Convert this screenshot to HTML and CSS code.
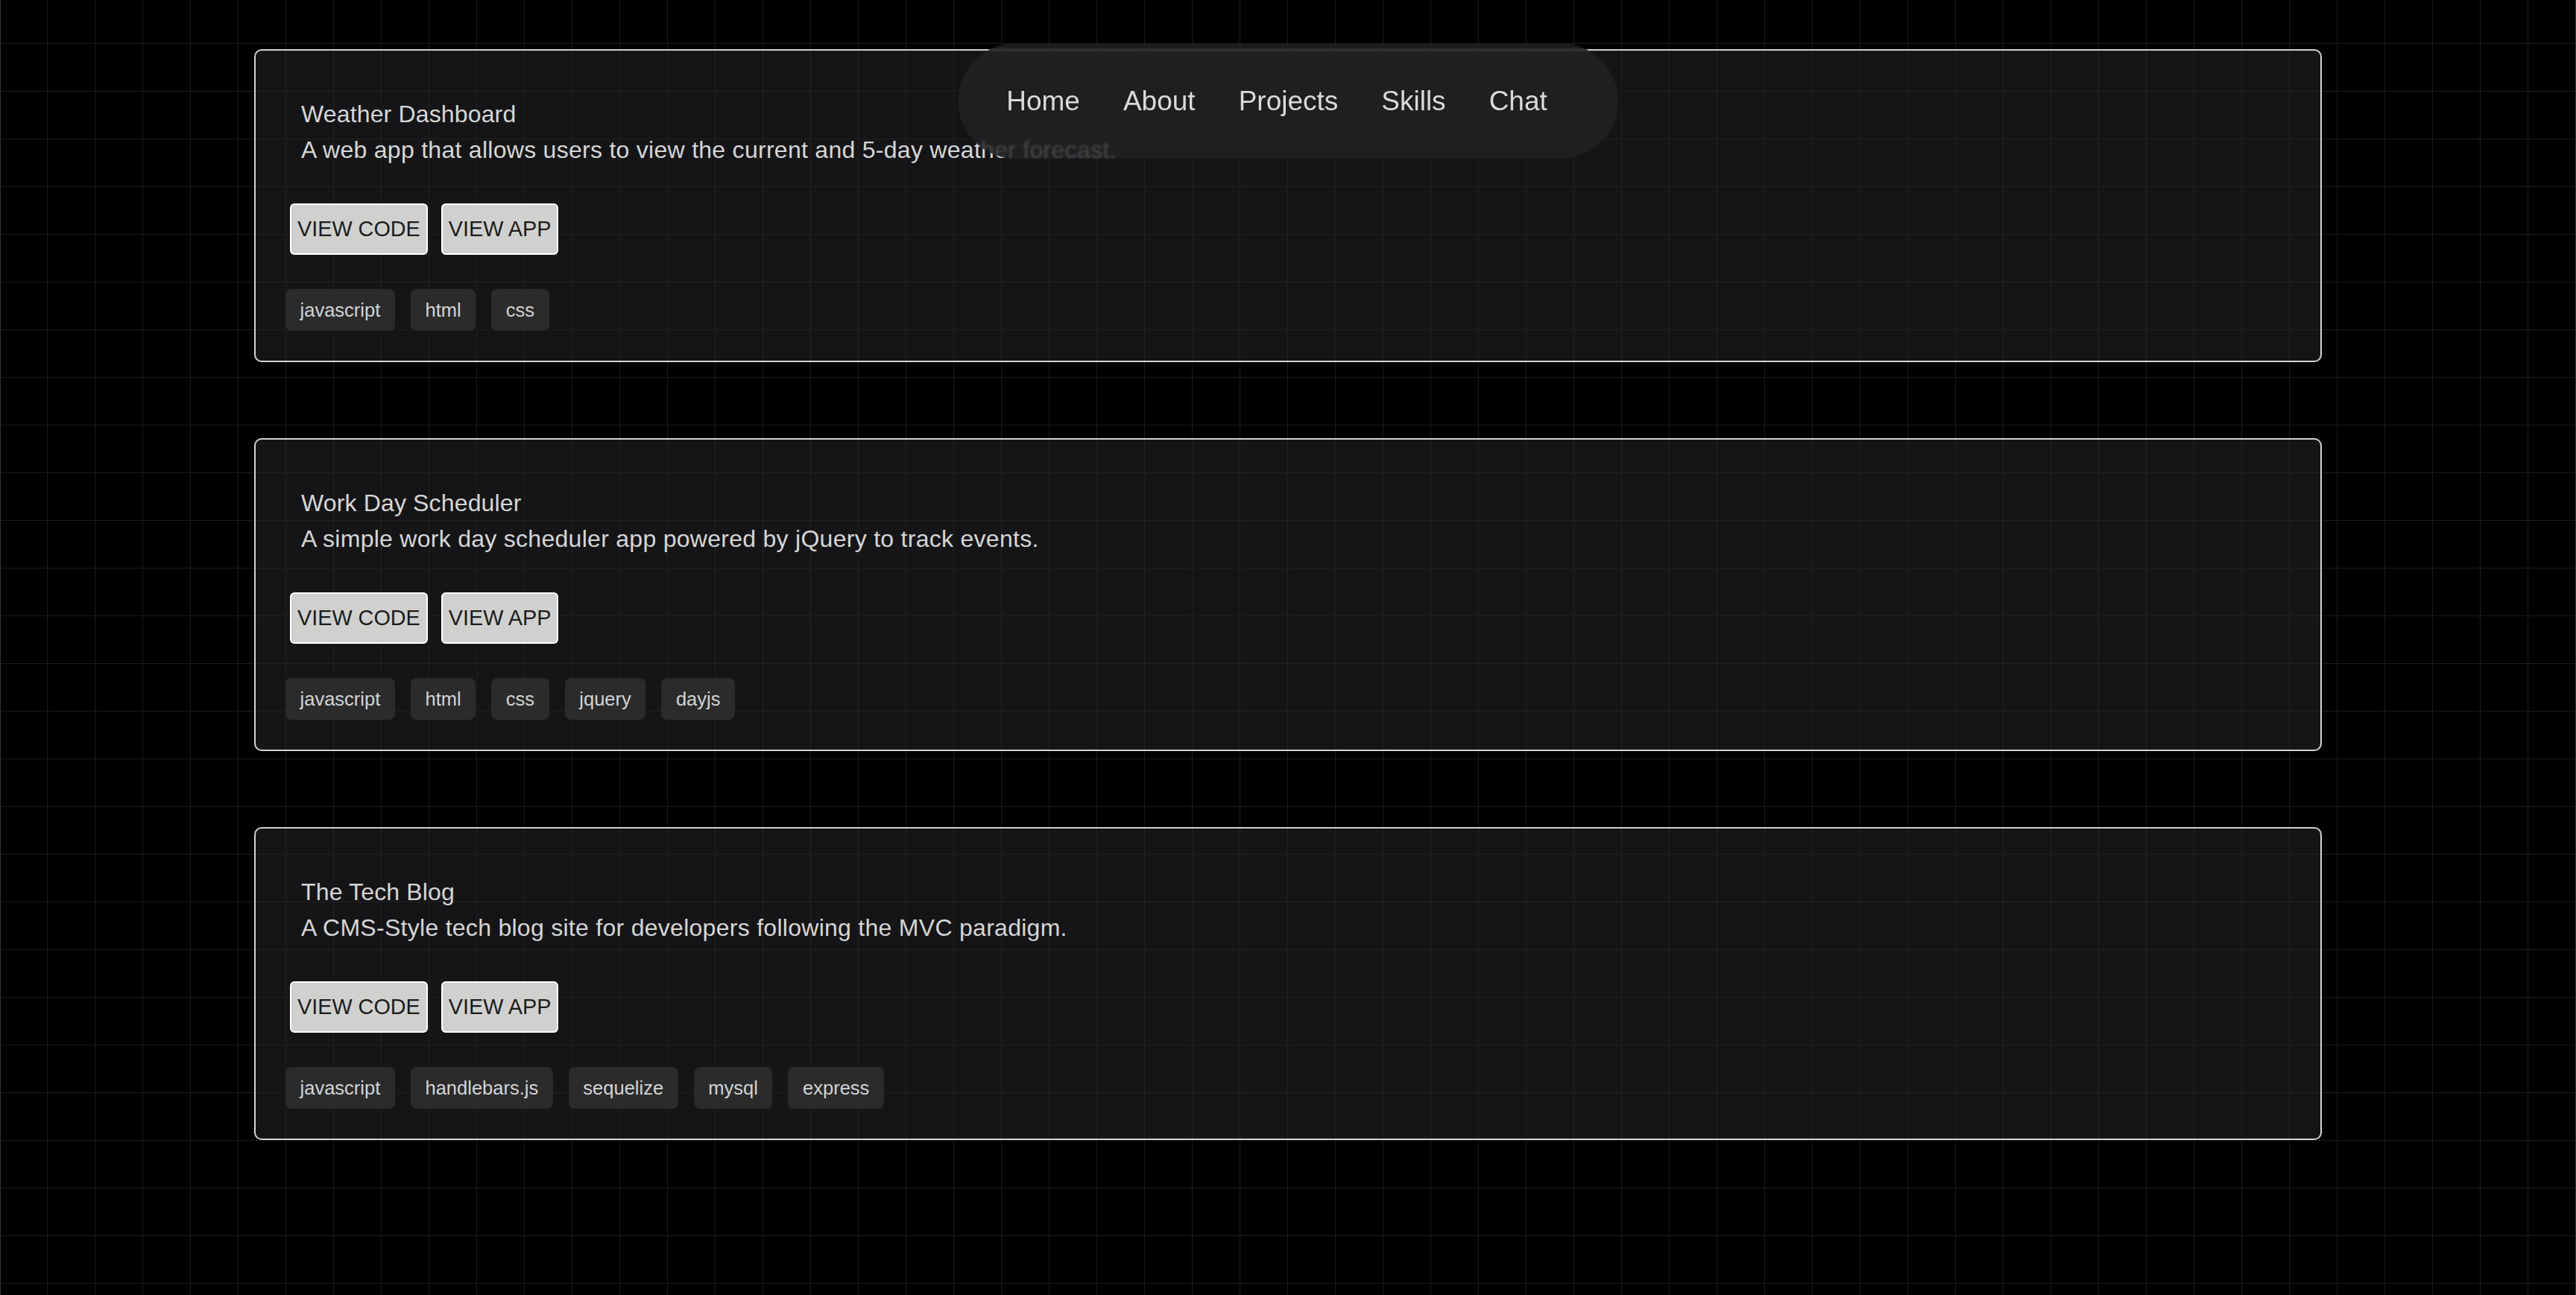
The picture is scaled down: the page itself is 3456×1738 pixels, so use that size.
FILE: index.html
```html
<!DOCTYPE html>
<html lang="en">
<head>
<meta charset="utf-8">
<title>Projects</title>
<link rel="stylesheet" href="styles.css">
</head>
<body>
<nav class="nav">
  <a class="nav-link" href="#">Home</a>
  <a class="nav-link" href="#">About</a>
  <a class="nav-link" href="#">Projects</a>
  <a class="nav-link" href="#">Skills</a>
  <a class="nav-link" href="#">Chat</a>
</nav>
<div class="page">
  <main class="projects">
    <section class="card">
      <div class="card-head">
        <h2 class="card-title">Weather Dashboard</h2>
        <p class="card-desc">A web app that allows users to view the current and 5-day weather forecast.</p>
      </div>
      <div class="actions">
        <button class="btn">VIEW CODE</button>
        <button class="btn">VIEW APP</button>
      </div>
      <ul class="tags">
        <li class="tag">javascript</li>
        <li class="tag">html</li>
        <li class="tag">css</li>
      </ul>
    </section>
    <section class="card">
      <div class="card-head">
        <h2 class="card-title">Work Day Scheduler</h2>
        <p class="card-desc">A simple work day scheduler app powered by jQuery to track events.</p>
      </div>
      <div class="actions">
        <button class="btn">VIEW CODE</button>
        <button class="btn">VIEW APP</button>
      </div>
      <ul class="tags">
        <li class="tag">javascript</li>
        <li class="tag">html</li>
        <li class="tag">css</li>
        <li class="tag">jquery</li>
        <li class="tag">dayjs</li>
      </ul>
    </section>
    <section class="card">
      <div class="card-head">
        <h2 class="card-title">The Tech Blog</h2>
        <p class="card-desc">A CMS-Style tech blog site for developers following the MVC paradigm.</p>
      </div>
      <div class="actions">
        <button class="btn">VIEW CODE</button>
        <button class="btn">VIEW APP</button>
      </div>
      <ul class="tags">
        <li class="tag">javascript</li>
        <li class="tag">handlebars.js</li>
        <li class="tag">sequelize</li>
        <li class="tag">mysql</li>
        <li class="tag">express</li>
      </ul>
    </section>
  </main>
</div>
</body>
</html>
```
FILE: styles.css
```css
* {
  box-sizing: border-box;
}

html, body {
  margin: 0;
  padding: 0;
}

body {
  min-height: 100vh;
  background-color: #000;
  background-image:
    linear-gradient(to right, #1c1c1c 0, #1c1c1c 1px, transparent 1px),
    linear-gradient(to bottom, #1c1c1c 0, #1c1c1c 1px, transparent 1px);
  background-size: 64px 64px;
  background-position: 63px 58px;
  font-family: "Liberation Sans", Arial, Helvetica, sans-serif;
  color: #d4d4d4;
  overflow: hidden;
}

.page {
  min-height: 100vh;
  border-left: 1px solid #383838;
  border-right: 1px solid #383838;
  padding: 66px 340px 100px;
}

.projects {
  display: flex;
  flex-direction: column;
  gap: 102px;
}

.card {
  border: 2px solid #d2d2d2;
  border-radius: 10px;
  background: rgba(39, 39, 42, 0.55);
  padding: 40px;
}

.card-head {
  padding: 21px 21px 0;
}

.card-title,
.card-desc {
  margin: 0;
  font-size: 32px;
  line-height: 48px;
  font-weight: 400;
  color: #d6d6d6;
}

.card-title {
  letter-spacing: 0.15px;
}

.card-desc {
  letter-spacing: 0.28px;
}

.actions {
  display: flex;
  gap: 18px;
  margin-top: 48px;
  padding-left: 6px;
}

.btn {
  font-family: "Liberation Sans", Arial, Helvetica, sans-serif;
  font-size: 28.8px;
  line-height: 33px;
  padding: 16px 8px;
  border: 2px solid #ffffff;
  border-radius: 6px;
  background: #d0d1cf;
  color: #1c1c1c;
  cursor: pointer;
}

.tags {
  list-style: none;
  margin: 46px 0 0;
  padding: 0;
  display: flex;
  gap: 21px;
}

.tag {
  font-size: 25.5px;
  line-height: 30px;
  padding: 13px 19.6px;
  background: #2b2b2c;
  border-radius: 8px;
  color: #d4d4d4;
}

.nav {
  position: fixed;
  top: 58px;
  left: 50%;
  transform: translateX(-50%);
  height: 155px;
  display: flex;
  align-items: center;
  gap: 58px;
  padding: 0 95px 0 65px;
  border-radius: 9999px;
  background: rgba(34, 34, 36, 0.8);
  backdrop-filter: blur(1.5px);
  z-index: 10;
}

.nav-link {
  font-size: 37px;
  color: #dadada;
  text-decoration: none;
  white-space: nowrap;
}
```
